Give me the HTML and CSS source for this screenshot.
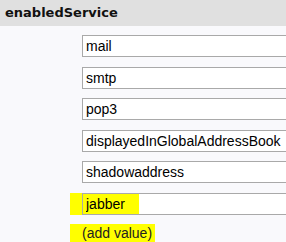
FILE: index.html
```html
<!DOCTYPE html>
<html lang="en">
<head>
  <meta charset="UTF-8" />
  <title>enabledService</title>
  <link rel="stylesheet" href="styles.css">
</head>
<body>

  <div class="attr-head">enabledService</div>

  <div class="values">
    <div class="row"><input class="val" value="mail" /></div>
    <div class="row"><input class="val" value="smtp" /></div>
    <div class="row"><input class="val" value="pop3" /></div>
    <div class="row"><input class="val" value="displayedInGlobalAddressBook" /></div>
    <div class="row"><input class="val" value="shadowaddress" /></div>
    <div class="row changed"><input class="val" value="jabber" /></div>
    <div class="row"><a class="add-value" href="#">(add value)</a></div>
  </div>

</body>
</html>
```

FILE: styles.css
```css
html {
  overflow: hidden;
}
body {
  margin: 0;
  background-color: #f9f9fc;
  font-family: "Liberation Sans", Arial, sans-serif;
}
.attr-head {
  height: 26px;
  line-height: 26px;
  padding-left: 5px;
  background-color: #e0e0e0;
  font-family: "DejaVu Sans", Verdana, sans-serif;
  font-weight: bold;
  font-size: 13px;
  color: #111;
}
.values {
  display: flex;
  flex-direction: column;
  gap: 9.5px;
  padding-top: 9px;
  overflow: hidden;
}
.row {
  padding-left: 82px;
}
.val {
  box-sizing: border-box;
  width: 210px;
  height: 22px;
  margin: 0;
  padding: 0 3px;
  border: 1px solid #a9a9a9;
  border-right: none;
  background-color: #fff;
  font-family: "Liberation Sans", Arial, sans-serif;
  font-size: 14px;
  color: #000;
  outline: none;
}
.changed {
  margin-left: 70px;
  padding-left: 12px;
  background: linear-gradient(to right, #ffff00 12px, transparent 12px);
}
.changed .val {
  background: linear-gradient(to right, #ffff00 56px, #fff 56px);
}
.add-value {
  display: inline-block;
  margin-left: -12px;
  margin-top: -1px;
  padding: 0 3px 0 12px;
  height: 18px;
  line-height: 18px;
  background-color: #ffff00;
  font-size: 14px;
  color: #222;
  text-decoration: none;
}
```
